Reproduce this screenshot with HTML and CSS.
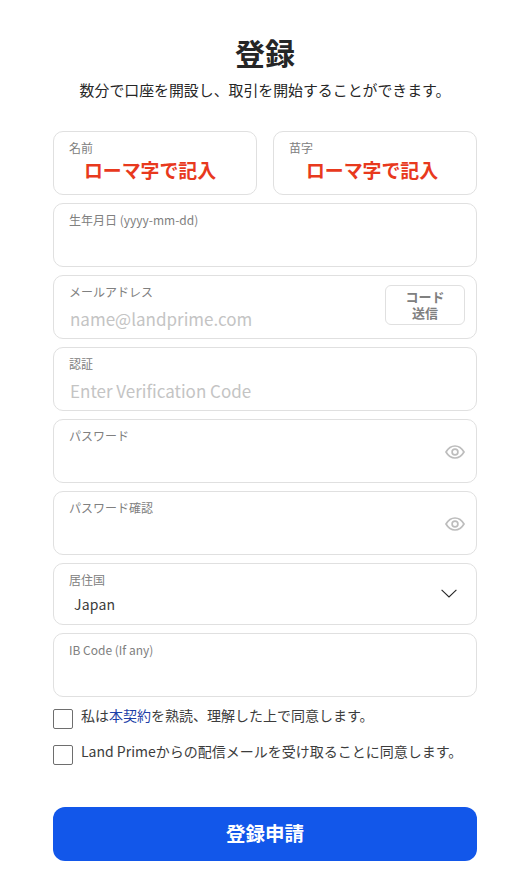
FILE: index.html
```html
<html>
    <head>
        <meta name="viewport" content="width=device-width, initial-scale=1.0">
        <title>登録 | Land Prime</title>
        <link rel="stylesheet" href="styles.css">
    </head>
    <body>
        <form class="signup">
            <h1>登録</h1>
            <p class="lead">数分で口座を開設し、取引を開始することができます。</p>
            <div class="names">
                <div class="field">
                    <label>名前</label>
                    <div class="romaji">ローマ字で記入</div>
                </div>
                <div class="field">
                    <label>苗字</label>
                    <div class="romaji">ローマ字で記入</div>
                </div>
            </div>
            <div class="field">
                <label>生年月日 (yyyy-mm-dd)</label>
                <input type="text">
            </div>
            <div class="field hasSide">
                <label>メールアドレス</label>
                <input type="text" placeholder="name@landprime.com">
                <button type="button" class="sendCode">コード<br>送信</button>
            </div>
            <div class="field">
                <label>認証</label>
                <input type="text" placeholder="Enter Verification Code">
            </div>
            <div class="field hasSide">
                <label>パスワード</label>
                <input type="password">
                <svg class="eye" viewBox="0 0 20 14" width="20" height="14">
                    <path d="M1 7C3.2 3.2 6.3 1 10 1s6.8 2.2 9 6c-2.2 3.800-5.300 6-9 6S3.200 10.800 1 7z"/>
                    <circle cx="10" cy="7" r="2.900"/>
                </svg>
            </div>
            <div class="field hasSide">
                <label>パスワード確認</label>
                <input type="password">
                <svg class="eye" viewBox="0 0 20 14" width="20" height="14">
                    <path d="M1 7C3.2 3.2 6.3 1 10 1s6.8 2.2 9 6c-2.2 3.800-5.300 6-9 6S3.200 10.800 1 7z"/>
                    <circle cx="10" cy="7" r="2.900"/>
                </svg>
            </div>
            <div class="field country hasSide">
                <label>居住国</label>
                <div class="value">Japan</div>
                <svg class="chevron" viewBox="0 0 16 9" width="16" height="9">
                    <path d="M.6.8 8 8 15.400.8"/>
                </svg>
            </div>
            <div class="field">
                <label>IB Code (If any)</label>
                <input type="text">
            </div>
            <div class="check">
                <input type="checkbox">
                <span>私は<a href="#">本契約</a>を熟読、理解した上で同意します。</span>
            </div>
            <div class="check">
                <input type="checkbox">
                <span>Land Primeからの配信メールを受け取ることに同意します。</span>
            </div>
            <button type="button" class="submit">登録申請</button>
        </form>
    </body>
</html>
```

FILE: styles.css
```css
html, body{
    margin: 0px;
    padding: 0px;
    background-color: white;
    font-family: "Noto Sans CJK JP", "Noto Sans", sans-serif;
    color: #262626;
}
.signup{
    width: 424px;
    margin-left: 53px;
    display: flex;
    flex-direction: column;
    gap: 8px;
}
h1{
    margin: 33px 0px 0px 0px;
    font-size: 30px;
    line-height: 39px;
    font-weight: 700;
    text-align: center;
}
.lead{
    margin: -1px 0px 22px 0px;
    font-size: 14.9px;
    line-height: 22px;
    text-align: center;
}
.names{
    display: flex;
    gap: 16px;
}
.names .field{
    flex: 1;
}
.field{
    position: relative;
    box-sizing: border-box;
    height: 64px;
    padding: 7px 15px 0px 15px;
    border: 1px solid #e0e0e0;
    border-radius: 10px;
    background-color: white;
}
.field label{
    display: block;
    font-size: 12px;
    line-height: 17px;
    color: #808080;
}
.field input{
    display: block;
    width: 100%;
    box-sizing: border-box;
    padding: 0px 0px 0px 1px;
    margin-top: 6px;
    border: none;
    outline: none;
    font-family: inherit;
    font-size: 17px;
    line-height: 25px;
    height: 25px;
    background: transparent;
}
.field input::placeholder{
    color: #c4c4c4;
    opacity: 1;
}
.romaji{
    margin: 1px 0px 0px 0px;
    font-size: 18.900px;
    line-height: 26px;
    font-weight: 700;
    color: #e8391d;
    text-align: center;
    padding-right: 10px;
}
.field + .field .romaji{
    padding-right: 6px;
}
.sendCode{
    position: absolute;
    top: 9px;
    right: 11px;
    width: 80px;
    height: 40px;
    padding: 0px;
    border: 1px solid #e0e0e0;
    border-radius: 6px;
    background-color: white;
    font-family: inherit;
    font-size: 13px;
    line-height: 16px;
    font-weight: 700;
    color: #808080;
}
.eye{
    position: absolute;
    top: 25px;
    right: 11px;
    fill: none;
    stroke: #bdbdbd;
    stroke-width: 1.700;
}
.country{
    height: 62px;
}
.value{
    margin: 6px 0px 0px 5px;
    font-size: 14px;
    line-height: 20px;
    letter-spacing: 0.2px;
    color: #3c3c3c;
}
.chevron{
    position: absolute;
    top: 25px;
    right: 19px;
    fill: none;
    stroke: #262626;
    stroke-width: 1.100;
}
.check{
    display: flex;
    align-items: flex-start;
    gap: 8px;
    height: 28px;
    font-size: 14px;
    line-height: 20px;
    color: #3c3c3c;
}
.check input{
    appearance: none;
    flex: none;
    width: 20px;
    height: 20px;
    margin: 4px 0px 0px 0px;
    border: 1px solid #6e6e6e;
    border-radius: 2px;
    background-color: white;
}
.check a{
    color: #1d3fa8;
    text-decoration: none;
}
.submit{
    height: 54px;
    margin-top: 30px;
    padding: 0px 0px 3px 0px;
    border: none;
    border-radius: 12px;
    background-color: #1257ea;
    color: white;
    font-family: inherit;
    font-size: 19.500px;
    font-weight: 700;
}
```
